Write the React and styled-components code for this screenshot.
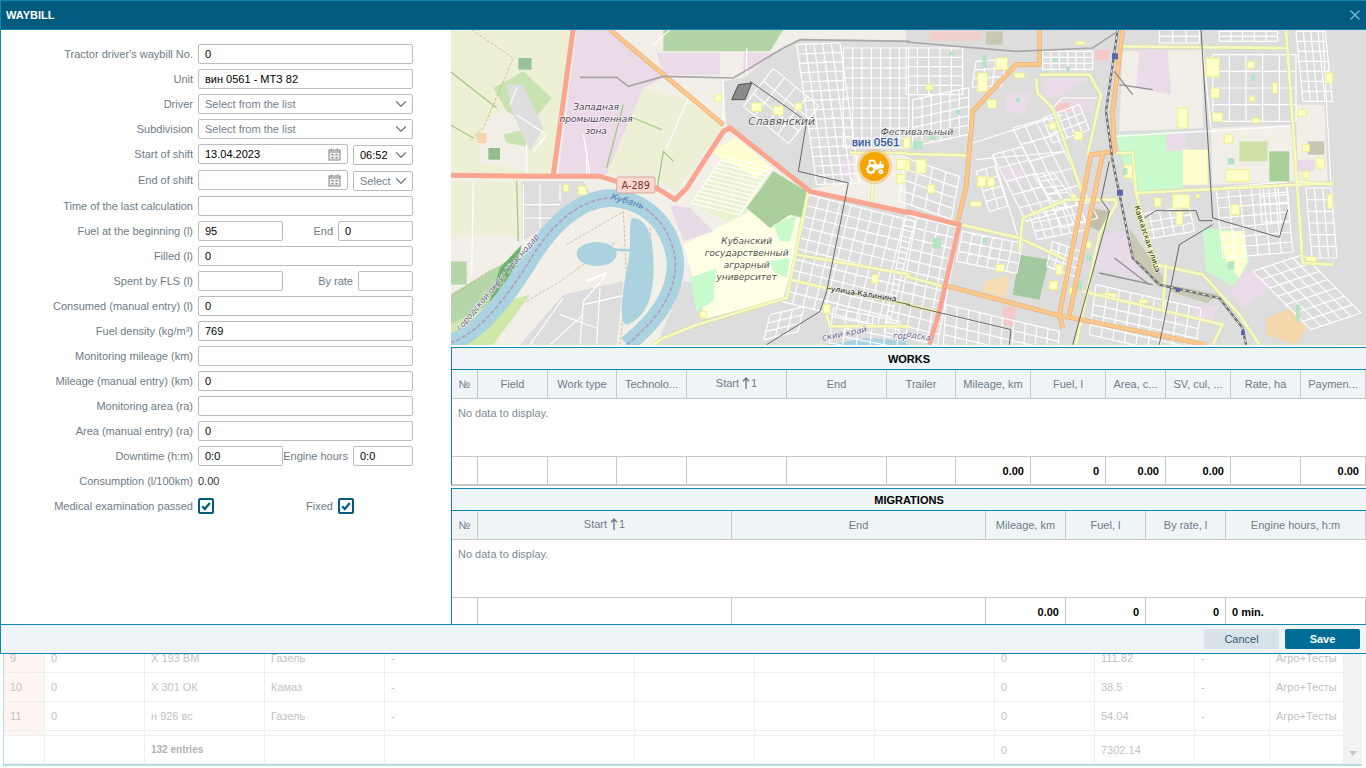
import React from 'react';
import styled, { createGlobalStyle } from 'styled-components';
import { ChevronDown, X } from 'lucide-react';
import { FaTractor } from 'react-icons/fa';

const Global = createGlobalStyle`
  html, body { margin: 0; padding: 0; background: #fff; overflow: hidden; }
  body { font-family: "Liberation Sans", Arial, sans-serif; font-size: 11px; }
  * { box-sizing: border-box; }
`;

/* ---------- page behind the modal ---------- */
const Page = styled.div`
  position: relative; width: 1366px; height: 768px; overflow: hidden; background: #fff;
  display: flex; flex-direction: column; justify-content: flex-end; padding: 0 4px 2px 3px;
`;
const BackTable = styled.div`
  display: flex; border-left: 1px solid #b8dce6; border-bottom: 2px solid #b8dce6; height: 124px;
`;
const BackRows = styled.div`width: 1340px; display: flex; flex-direction: column; justify-content: flex-end;`;
const BackRow = styled.div`
  display: grid; height: ${p => p.$h || 29}px; flex: none;
  grid-template-columns: 41px 100px 120px 120px 250px 120px 120px 120px 100px 100px 75px 74px;
  border-bottom: 1px solid #efefef;
`;
const BackCell = styled.div`
  padding: 0 6px; display: flex; align-items: center; color: ${p => p.$bold ? '#b2b2b2' : '#c2c2c2'};
  font-size: ${p => p.$bold ? 10 : 11}px; font-weight: ${p => p.$bold ? 700 : 400}; white-space: nowrap;
  border-right: 1px solid #efefef; background: ${p => p.$pink ? '#fff5f2' : '#fff'};
`;
const BackScroll = styled.div`
  width: 18px; background: #f3f3f3; display: flex; align-items: flex-end; justify-content: center; padding-bottom: 8px;
  &::after { content: ''; border: 4px solid transparent; border-top: 5px solid #c4c4c4; border-bottom: 0; }
`;

/* ---------- modal ---------- */
const Modal = styled.div`
  position: absolute; left: 0; top: 0; width: 1366px; height: 654px; display: flex; flex-direction: column;
  background: #fff; border-left: 1px solid #0d86b3; border-top: 1px solid #0d86b3;
`;
const Header = styled.div`
  height: 29px; flex: none; background: #005b7f; border-bottom: 1px solid #0d86b3; color: #fff;
  display: flex; align-items: center; justify-content: space-between; padding: 0 3px 0 5px;
  font-size: 11px; font-weight: 700;
`;
const Close = styled.span`color: #6fb3cc; display: flex;`;
const Main = styled.div`flex: 1; display: flex; min-height: 0;`;
const Form = styled.div`
  width: 450px; flex: none; padding-top: 14px; display: flex; flex-direction: column; gap: 5px;
`;
const Row = styled.div`display: flex; height: ${p => p.$h || 20}px; align-items: flex-start;`;
const Label = styled.div`
  width: ${p => p.$w || 197}px; flex: none; text-align: right; padding-right: 5px; color: #6e7b86; height: 20px; line-height: 20px;
  white-space: nowrap; font-size: 11px;
`;
const Field = styled.div`
  width: ${p => p.$w || 215}px; height: 20px; flex: none; border: 1px solid #bcbcbc; border-radius: 2px; background: #fff;
  display: flex; align-items: center; justify-content: space-between; padding: 0 6px; color: ${p => p.$ph ? '#75818c' : '#000'};
  font-size: 11px; white-space: nowrap; margin-top: ${p => p.$mt || 0}px; margin-left: ${p => p.$ml || 0}px;
`;
const Chevron = styled(ChevronDown)`color: #6e7b86; margin-right: -4px; flex: none;`;
const Plain = styled.div`color: #333; line-height: 20px; font-size: 11px;`;
const Check = styled.div`
  width: 16px; height: 16px; margin-top: 2px; border: 2px solid #005b7f; border-radius: 2px; display: flex; align-items: center; justify-content: center;
`;
const Right = styled.div`flex: 1; min-width: 0; display: flex; flex-direction: column;`;
const MapFrame = styled.div`position: relative; height: 315px; flex: none; background: #ddd; overflow: hidden; margin-bottom: 2px;`;
const MapSvg = styled.svg`display: block; width: 915px; height: 315px;`;
const MapLabel = styled.text`
  font-family: "DejaVu Sans", sans-serif; font-style: ${p => p.$upright ? 'normal' : 'italic'}; font-size: ${p => p.$size || 27}px;
  fill: ${p => p.$color || '#4f4056'}; stroke: ${p => p.$halo || 'rgba(255,255,255,.75)'}; stroke-width: 4px; paint-order: stroke;
  text-anchor: middle;
`;
const PinName = styled.div`
  position: absolute; left: 401px; top: 106px; color: #1c4f94; font-size: 11px; letter-spacing: .25px;
  -webkit-text-stroke: .25px #1c4f94; text-shadow: 0 0 2px #fff, 0 0 2px #fff; white-space: nowrap;
`;
const Pin = styled.div`
  position: absolute; left: 409px; top: 122px; width: 29px; height: 29px; border-radius: 50%; background: #f5a300;
  box-shadow: 0 0 0 3px rgba(240, 190, 110, .55); color: #fff; display: flex; align-items: center; justify-content: center;
`;

const Section = styled.div`
  border-left: 1px solid #0d86b3; border-top: 1px solid #0d86b3; margin-top: ${p => p.$mt || 0}px; flex: none;
  border-bottom: ${p => p.$last ? 0 : '2px solid #c8c8c8'};
`;
const Title = styled.div`
  height: 22px; background: #eff4f7; border-bottom: 1px solid #0d86b3; text-align: center; line-height: 22px; font-weight: 700; font-size: 11px; color: #000;
`;
const Cols = styled.div`display: grid; grid-template-columns: ${p => p.$cols}; height: ${p => p.$h}px;
  background: ${p => p.$head ? '#eff4f7' : '#fff'}; border-bottom: ${p => p.$nob ? 0 : '1px solid #c8c8c8'};`;
const HeadCell = styled.div`
  border-right: 1px solid #c8c8c8; color: #6e7b86; font-size: 11px; display: flex; align-items: center; justify-content: center;
  padding: 0 6px; overflow: hidden; white-space: nowrap;
`;
const Sort = styled.span`display: inline-flex; align-items: center; gap: 1px; margin-top: -2px; color: #6e7b86; `;
const SortWord = styled.span`margin-right: 2px;`;
const FootCell = styled.div`
  border-right: 1px solid #c8c8c8; color: #000; font-weight: 700; font-size: 11px; display: flex; align-items: center;
  justify-content: ${p => p.$left ? 'flex-start' : 'flex-end'}; padding: ${p => p.$low ? 2 : 0}px 6px 0; white-space: nowrap;
`;
const Empty = styled.div`height: 58px; padding: 8px 6px; color: #7d8a94; font-size: 11px; border-bottom: 1px solid #c8c8c8;`;
const Footer = styled.div`
  height: 30px; flex: none; background: #eff4f7; border-top: 1px solid #0d86b3; border-bottom: 1px solid #0d86b3;
  display: flex; justify-content: flex-end; align-items: flex-start; gap: 6px; padding: 4px 6px 0 0;
`;
const Btn = styled.div`
  width: 75px; height: 20px; border-radius: 2px; text-align: center; line-height: 20px; font-size: 11px;
  font-weight: ${p => p.$primary ? 700 : 400};
  background: ${p => p.$primary ? '#006d97' : '#d8e3e9'}; color: ${p => p.$primary ? '#fff' : '#33586c'};
`;

/* ---------- small icons ---------- */
const Calendar = () => (
  <svg width="13" height="13" viewBox="0 0 13 13" style={{ flex: 'none' }}>
    <rect x="1" y="2" width="11" height="10" fill="#f2f2f2" stroke="#7d868c" />
    <path d="M1 4h11" stroke="#7d868c" /><path d="M3.5 .5v2M9.5 .5v2" stroke="#7d868c" />
    <path d="M3.5 6h2v1.6h-2zM7.5 6h2v1.6h-2zM3.5 9h2v1.6h-2zM7.5 9h2v1.6h-2z" fill="#7d868c" />
  </svg>
);
const Tick = () => (
  <svg width="12" height="12" viewBox="0 0 12 12"><path d="M2.2 6.3 4.8 9 9.8 3" fill="none" stroke="#005b7f" strokeWidth="2.2" /></svg>
);
const ArrowUp = () => (
  <svg width="8" height="12" viewBox="0 0 8 12"><path d="M4 12V1M1 4.2 4 1l3 3.2" fill="none" stroke="#6e7b86" strokeWidth="1.4" /></svg>
);

/* ---------- map ---------- */
const pt = (a) => `${a[0].toFixed(1)} ${a[1].toFixed(1)}`;
function grid(o, u, nu, v, nv) {
  let d = '';
  for (let i = 0; i <= nu; i++) {
    const a = [o[0] + u[0] * i, o[1] + u[1] * i];
    d += `M${pt(a)}L${pt([a[0] + v[0] * nv, a[1] + v[1] * nv])}`;
  }
  for (let j = 0; j <= nv; j++) {
    const a = [o[0] + v[0] * j, o[1] + v[1] * j];
    d += `M${pt(a)}L${pt([a[0] + u[0] * nu, a[1] + u[1] * nu])}`;
  }
  return d;
}
const polys7 = [
  ['#eef0d5', '0,0 370,0 310,440 0,440'], ['#eef0d5', '0,460 215,460 215,620 0,620'],
  ['#ebdbe8', '380,5 480,5 640,150 580,180 470,440 325,440'], ['#b3d4a5', '640,5 1000,5 960,70 640,70'],
  ['#ebdbe8', '620,75 1000,75 880,140 640,140'], ['#f2efe9', '810,75 880,75 880,140 810,140'],
  ['#eef0d5', '580,180 710,215 815,295 680,490 600,440 470,440'], ['#dddddd', '215,460 400,460 430,510 300,590 215,640'],
  ['#f2efe9', '100,290 160,240 230,300 230,430 90,400'],
  ['#c8e3b0', '130,180 220,130 305,210 240,290 170,250'], ['#c8e3b0', '160,320 240,300 225,355 170,345'],
  ['#96bb8c', '115,360 150,360 150,395 115,395'], ['#9cc09c', '205,90 245,90 245,125 205,125'], ['#f4d5b0', '80,315 110,315 110,345 80,345'],
  ['#dedede', '170,170 220,170 280,300 240,370 190,260'],
  ['#b5d6a8', '0,700 50,700 50,770 0,770'], ['#b5d6a8', '0,800 170,700 120,830 0,890'], ['#6fb06e', '150,720 215,650 190,770 110,850'],
  ['#cfe8a8', '0,890 120,830 240,800 130,950 0,950'],
  ['#dddddd', '210,950 340,800 520,760 500,950'], ['#dddddd', '700,760 1000,800 950,950 620,950'],
  ['#eaf2cf', '820,385 965,420 860,600 720,520'], ['#ffffd0', '780,370 860,330 965,420 920,450'],
  ['#ffffe5', '880,560 1060,500 1010,810 960,830 770,880 700,650'], ['#aacf9a', '890,540 970,430 1070,490 1060,570 1020,560 960,600'],
  ['#c8facc', '720,750 800,720 790,820 740,850'], ['#c8facc', '960,700 1020,690 1010,750 970,730'], ['#c8facc', '970,590 1040,560 1020,640 990,640'],
  ['#e8dbe8', '660,530 720,540 790,610 700,640'],
  ['#dddddd', '880,150 1000,60 1050,35 1380,35 1380,380 1210,380 1200,460 1070,485 830,295 820,160'],
  ['#ebdbe8', '1165,395 1210,395 1210,450 1165,440'],
  ['#dddddd', '1075,490 1380,560 1380,950 950,950 1000,810 1060,600'],
  ['#dddddd', '740,880 1000,810 950,950 650,950'], ['#aad3df', '1130,950 1250,930 1380,940 1380,955 1130,955'],
];
const polys8 = [
  ['#dddddd', '0,0 1282,0 1282,950 0,950'],
  ['#f2efe9', '650,70 890,65 890,300 640,310'], ['#e9dbe8', '700,65 785,65 795,200 690,180'],
  ['#c8facc', '630,320 830,310 830,480 690,490 650,400'], ['#e9dbe8', '780,320 840,310 840,365 780,370'],
  ['#ffffd0', '830,365 905,365 905,470 830,470'],
  ['#f2efe9', '915,300 1155,290 1170,460 920,470'], ['#cfe3a8', '1000,340 1085,340 1085,400 1000,400'], ['#a8d098', '1090,370 1150,370 1150,460 1090,460'],
  ['#f2efe9', '1170,230 1255,230 1265,460 1175,460'], ['#c8c8b0', '1205,340 1255,340 1255,380 1205,380'], ['#e9dbe8', '1175,395 1225,395 1225,430 1175,430'],
  ['#c8facc', '890,600 1010,610 1030,700 990,780 900,730'], ['#ffffd0', '940,610 1010,610 1025,700 1000,750 960,700'],
  ['#e9dbe8', '1020,720 970,790 1020,840 1100,770'], ['#f3d8ad', '1080,870 1160,840 1200,900 1170,950 1080,920'],
  ['#e8dbe8', '580,620 670,610 720,770 650,740 560,720'], ['#c8c8b4', '670,600 780,760 750,770 680,680'], ['#c8c8b4', '790,770 940,800 900,825 790,790'],
  ['#a4c8a0', '340,680 430,695 400,815 320,800'], ['#f6ddb4', '240,760 310,740 300,810 230,790'], ['#f5c8c8', '290,835 330,835 325,895 290,890'],
  ['#c0c0a8', '550,540 610,550 580,610 540,590'], ['#efd0cc', '70,10 230,10 220,40 70,40'], ['#c8c8b4', '240,10 290,10 290,50 240,50'],
  ['#e9dbe8', '300,200 370,195 360,260 300,250'], ['#e9dbe8', '410,150 550,150 470,200 420,210'], ['#e9dbe8', '450,220 570,210 560,255 450,250'],
  ['#e9dbe8', '290,420 350,420 350,465 300,460'], ['#e9dbe8', '860,830 930,835 920,880 860,870'],
  ['#dff0d8', '910,90 940,90 940,150 910,150'], ['#f5c8c8', '570,65 610,65 605,95 565,95'], ['#f5c8c8', '450,225 490,225 490,250 450,250'],
];
const b8 = [[270,90,35,35],[215,135,30,55],[60,170,20,15],[245,215,25,25],[325,135,30,15],[510,40,25,10],[430,285,20,20],[505,310,25,25],[30,395,30,40],[65,470,20,25],[215,445,25,30],[245,450,20,25],[195,520,30,15],[495,500,15,15],[745,510,20,25],[800,500,50,40],[975,530,25,30],[815,240,30,60],[1025,100,20,20],[1100,165,15,30],[1030,205,15,15],[1260,135,20,30],[1175,245,25,20],[955,320,25,25],[960,425,70,35],[1190,350,20,20],[1230,390,25,30],[1190,430,20,20],[1200,685,30,15],[900,90,40,55],[915,180,25,30],[920,255,30,25],[1040,270,20,15],[450,710,20,30],[590,795,40,15],[700,815,25,10],[870,500,10,10],[430,760,25,25],[490,780,20,20],[540,640,15,20],[0,400,10,30],[655,410,25,40],[270,710,25,20],[810,550,20,40],[1265,500,15,40]];
const b7 = [[1340,395,40,30],[1340,440,25,25],[795,200,20,20],[905,225,30,25],[970,235,30,25],[1035,225,20,20],[340,470,15,20],[385,475,25,25],[1265,740,20,25],[1360,330,20,30],[750,850,20,20],[1120,830,20,25]];
const pale8 = [[70,320,20,15],[150,245,12,15],[20,340,30,25],[330,210,12,12],[440,90,15,12],[480,115,12,15],[80,630,25,30],[230,630,12,15],[510,760,18,25],[540,680,18,18],[650,420,14,20],[965,390,20,20],[965,700,20,25],[1035,140,12,18],[1170,830,12,50],[230,80,12,40],[130,70,15,12]];
const white7 = [
  grid([1040,50],[26,-1],5,[4,28],15), grid([880,235],[34,28],4,[30,-38],3), grid([1180,60],[28,0],7,[0,30],10),
  grid([1075,500],[32,8],10,[-8,32],10), grid([960,860],[34,-8],3,[-6,25],3), grid([1150,840],[40,8],5,[-3,26],4),
  'M390 950L400 820L470 740M240 950L340 810M300 950L400 860M400 830L530 800M330 860L440 900M450 780L440 950',
  'M220 470V640M270 470V600M220 530H330M220 570H330M330 470V520',
  'M70 460L65 740M180 230L200 180M200 260L290 320L250 370M230 350V440M400 320L420 440M650 360L715 210M610 50L660 5M820 150V290M890 60V140M410 370V440',
];
const white8 = [
  grid([0,560],[32,8],5,[-6,32],11), grid([170,610],[30,6],6,[-6,30],3), grid([120,830],[34,8],10,[-2,30],4),
  grid([0,60],[34,0],5,[0,28],5), grid([410,70],[25,0],6,[0,18],3),
  grid([320,300],[35,-10],3,[25,50],6), grid([260,380],[30,-8],3,[20,40],5), grid([760,5],[40,0],3,[0,20],2),
  grid([1170,10],[22,0],4,[3,30],7), grid([920,80],[50,0],5,[0,50],4), grid([930,480],[35,-3],6,[3,30],7),
  grid([1040,730],[30,-10],5,[25,25],7), grid([1200,480],[25,0],3,[3,35],6), grid([570,770],[35,8],9,[-4,30],5),
  grid([700,560],[30,-5],5,[5,25],3), grid([380,440],[30,-4],2,[15,20],5), grid([0,390],[40,14],4,[-6,32],4),
  grid([20,215],[28,-6],6,[0,28],5), grid([210,430],[28,-8],2,[10,30],4), grid([370,560],[25,-5],6,[8,25],3),
  grid([940,10],[35,0],5,[0,15],2), grid([410,270],[22,-8],5,[10,25],3), grid([440,640],[22,8],4,[-6,25],3),
  grid([210,100],[30,-2],3,[-4,26],3), grid([1060,480],[28,-2],3,[2,26],4),
  'M200 345L470 260M210 395L480 370M630 325L1150 295M915 300L890 65M1250 5L1275 470M260 380L340 640M440 240L470 210H575',
];
const Road = ({ d, fill, casing, w }) => (
  <>
    <path d={d} fill="none" stroke={casing} strokeWidth={w + 3} strokeLinejoin="round" />
    <path d={d} fill="none" stroke={fill} strokeWidth={w} strokeLinejoin="round" />
  </>
);
const Trunk = '#f9a58f', Pri = '#fbc78d', PriC = '#e8a865', Sec = '#f7fabf', SecC = '#d9dc9a';
const river = 'M0 945C90 915 170 810 250 680C300 600 380 515 480 510C590 515 660 590 675 690C685 780 630 870 530 950';

const MapView = () => (
  <MapSvg viewBox="3 6 2745 945" preserveAspectRatio="none">
    <rect x="0" y="0" width="2750" height="960" fill="#f2efe9" />
    {polys7.map(([c, p], i) => <polygon key={i} points={p} fill={c} />)}
    <g transform="translate(1368 0)">{polys8.map(([c, p], i) => <polygon key={i} points={p} fill={c} />)}</g>
    <rect x="2650" y="0" width="100" height="960" fill="#dddddd" />
    <path d={grid([820,385],[145,35],1,[-8,11.7],12)} fill="none" stroke="#fff" strokeWidth="4" />
    <path d="M0 130L140 240M0 290L70 330M550 270L635 305M520 230L470 420M620 490L640 370L670 400M200 460L205 640" fill="none" stroke="#a3c98a" strokeWidth="4" />
    <g fill="none" stroke="#fff" strokeWidth="3.5">
      {white7.map((d, i) => <path key={i} d={d} />)}
      <g transform="translate(1368 0)">{white8.map((d, i) => <path key={i} d={d} />)}</g>
    </g>
    <path d="M65 5L190 90L100 300L60 340M350 650L520 550L530 760M230 820L330 760L500 640M510 950L530 760M0 810L130 720M600 600L610 740" fill="none" stroke="#c9a56a" strokeWidth="2" strokeDasharray="9 5" />
    <path d={river} fill="none" stroke="#aad3df" strokeWidth="52" />
    <path d={river} fill="none" stroke="#ae9fc0" strokeWidth="5" strokeDasharray="14 5" />
    <ellipse cx="440" cy="678" rx="60" ry="36" fill="#aad3df" />
    <path d="M490 665L560 668" stroke="#aad3df" strokeWidth="8" />
    <path d="M545 570C590 570 612 620 610 720C612 800 590 870 530 890C505 885 515 800 535 700C545 640 535 600 545 570Z" fill="#aad3df" />
    <path d="M410 760L470 735" stroke="#fff" strokeWidth="8" />
    <g stroke="#eef08a" strokeWidth="3" fill="#ffffc8">
      {b7.map(([x, y, w, h], i) => <rect key={i} x={x} y={y} width={w} height={h} />)}
      <g transform="translate(1368 0)">{b8.map(([x, y, w, h], i) => <rect key={i} x={x} y={y} width={w} height={h} />)}</g>
    </g>
    <g transform="translate(1368 0)" fill="#b5e3c5">
      {pale8.map(([x, y, w, h], i) => <rect key={i} x={x} y={y} width={w} height={h} />)}
    </g>
    <g>
      <Road d="M1075 490L1010 810L740 890L640 930L610 950" fill={Sec} casing={SecC} w={8} />
      <Road d="M1040 680L1380 740M1020 755L1130 780L1380 830M1130 860L1140 895H1380M1270 460L1265 520M1200 375H1380" fill={Sec} casing={SecC} w={8} />
      <g transform="translate(1368 0)">
        <Road d="M0 378L190 382M400 140H550L585 200L545 380M390 150L395 195L440 240L530 500M650 55L1140 60M1140 5L1190 705L1282 710M690 495L1282 465M620 375H680L690 495L750 710L890 740L1000 860L1060 950M350 570L480 515H630V530L580 620L510 950M165 590L340 630L480 695M350 570L340 670M530 790L950 890L920 950M780 710L770 850M0 745L110 775M0 830L90 850M1170 460L1282 470" fill={Sec} casing={SecC} w={8} />
        <Road d="M400 5V110H330L200 250L180 480L155 580M650 5L620 250L625 370L555 380L460 860L470 900M590 380L490 860M110 770L450 860L900 950" fill={Pri} casing={PriC} w={11} />
        <path d="M0 550L160 590L100 850L70 950" fill="none" stroke={Trunk} strokeWidth="14" />
      </g>
      <Road d="M480 5L820 290" fill={Pri} casing={PriC} w={11} />
      <path d="M370 0L310 440M0 442L300 445L450 445L500 460L620 480L675 515L710 480L820 310L840 300L1080 490L1380 555" fill="none" stroke={Trunk} strokeWidth="15" strokeLinejoin="round" />
    </g>
    <g transform="translate(1368 0)" fill="none">
      <path d="M635 5L600 250L620 400L680 690L760 770L940 810L1010 900L1020 950" stroke="#707070" strokeWidth="7" />
      <path d="M635 5L600 250L620 400L680 690L760 770L940 810L1010 900L1020 950" stroke="#fff" strokeWidth="3" strokeDasharray="10 10" />
      <path d="M625 130L680 200M640 170L740 185M625 690L730 770M580 735L740 770" stroke="#909090" strokeWidth="4" />
      <path d="M885 5L920 570L1120 628L1145 545M920 590L820 650L760 950M715 570L750 548H870L880 578H920M610 400L585 515L610 550L500 950M0 830L315 905L310 950" stroke="#666" strokeWidth="3" />
      <path d="M0 42L330 70L560 60L635 10" stroke="#a8a8a8" strokeWidth="5" />
      <g fill="#5a68a8" stroke="none">
        <rect x="618" y="76" width="18" height="18" /><rect x="633" y="485" width="18" height="18" /><rect x="809" y="780" width="13" height="12" /><rect x="1005" y="908" width="12" height="13" />
      </g>
    </g>
    <path d="M390 148H500L535 175L640 145L850 150L1000 60L1050 35L1380 40" fill="none" stroke="#a8a8a8" strokeWidth="5" />
    <path d="M900 160L1070 280L1045 430L1195 465L1130 790L1110 850L950 950M1130 780L1380 830" fill="none" stroke="#666" strokeWidth="3" />
    <path d="M845 215L865 170L905 165L885 215Z" fill="#8a8a8a" stroke="#555" strokeWidth="3" />
    <MapLabel x="438" y="245">Западная</MapLabel>
    <MapLabel x="438" y="282">промышленная</MapLabel>
    <MapLabel x="438" y="318">зона</MapLabel>
    <MapLabel x="995" y="290" $size={32} $color="#555">Славянский</MapLabel>
    <MapLabel x="1401" y="322" $size={28} $color="#555">Фестивальный</MapLabel>
    <MapLabel x="890" y="648" $color="#55553a">Кубанский</MapLabel>
    <MapLabel x="890" y="685" $color="#55553a">государственный</MapLabel>
    <MapLabel x="890" y="720" $color="#55553a">аграрный</MapLabel>
    <MapLabel x="890" y="756" $color="#55553a">университет</MapLabel>
    <MapLabel transform="translate(530 528) rotate(17)" $size={27} $color="#4f7fc0" $halo="rgba(170,211,223,.6)">Кубань</MapLabel>
    <MapLabel transform="translate(150 768) rotate(-50)" $size={25} $color="#6e5f88">городской округ Краснодар</MapLabel>
    <MapLabel transform="translate(1240 805) rotate(9)" $size={23} $upright $color="#222">улица Калинина</MapLabel>
    <MapLabel transform="translate(2085 635) rotate(72)" $size={22} $upright $color="#222" $halo={Sec}>Кавказская улица</MapLabel>
    <MapLabel transform="translate(1185 925) rotate(-11)" $size={26} $color="#6e5f88">ский край</MapLabel>
    <MapLabel x="1352" y="932" $size={26} $color="#6e5f88">гор</MapLabel>
    <MapLabel transform="translate(1405 932) rotate(10)" $size={24} $color="#6e5f88">одска</MapLabel>
    <g>
      <rect x="500" y="447" width="115" height="48" rx="6" fill="#f8d8cf" stroke="#d9a898" strokeWidth="3" />
      <MapLabel x="557" y="482" $size={29} $upright $color="#7a3526" $halo="transparent">A-289</MapLabel>
    </g>
  </MapSvg>
);

/* ---------- data ---------- */
const wCols = '26px 70px 69px 70px 100px 100px 69px 75px 75px 60px 65px 70px 65px';
const mCols = '26px 254px 254px 80px 80px 80px 140px';
const wHead = ['№', 'Field', 'Work type', 'Technolo...', 'S', 'End', 'Trailer', 'Mileage, km', 'Fuel, l', 'Area, c...', 'SV, cul, ...', 'Rate, ha', 'Paymen...'];
const wFoot = ['', '', '', '', '', '', '', '0.00', '0', '0.00', '0.00', '', '0.00'];
const mHead = ['№', 'S', 'End', 'Mileage, km', 'Fuel, l', 'By rate, l', 'Engine hours, h:m'];
const back = [
  ['9', '0', 'Х 193 ВМ', 'Газель', '111.82'], ['10', '0', 'Х 301 ОК', 'Камаз', '38.5'], ['11', '0', 'н 926 вс', 'Газель', '54.04'],
];

const renderHead = (h, i) => (
  <HeadCell key={i}>
    {h === 'S' ? <Sort><SortWord>Start</SortWord><ArrowUp />1</Sort> : h}
  </HeadCell>
);

export default function App() {
  return (
    <Page>
      <Global />
      <BackTable>
        <BackRows>
          {back.map((r) => (
            <BackRow key={r[0]}>
              <BackCell $pink>{r[0]}</BackCell><BackCell>{r[1]}</BackCell><BackCell>{r[2]}</BackCell><BackCell>{r[3]}</BackCell><BackCell>-</BackCell>
              <BackCell /><BackCell /><BackCell /><BackCell>0</BackCell><BackCell>{r[4]}</BackCell><BackCell>-</BackCell><BackCell>Агро+Тесты</BackCell>
            </BackRow>
          ))}
          <BackRow $h={5}><BackCell $pink /><BackCell /><BackCell /><BackCell /><BackCell /><BackCell /><BackCell /><BackCell /><BackCell /><BackCell /><BackCell /><BackCell /></BackRow>
          <BackRow $h={28}>
            <BackCell /><BackCell /><BackCell $bold>132 entries</BackCell><BackCell /><BackCell /><BackCell /><BackCell /><BackCell />
            <BackCell>0</BackCell><BackCell>7302.14</BackCell><BackCell /><BackCell />
          </BackRow>
        </BackRows>
        <BackScroll />
      </BackTable>

      <Modal>
        <Header>WAYBILL<Close><X size={16} strokeWidth={2.4} /></Close></Header>
        <Main>
          <Form>
            <Row><Label>Tractor driver's waybill No.</Label><Field>0</Field></Row>
            <Row><Label>Unit</Label><Field>вин 0561 - МТЗ 82</Field></Row>
            <Row><Label>Driver</Label><Field $ph>Select from the list<Chevron size={18} strokeWidth={1.6} /></Field></Row>
            <Row><Label>Subdivision</Label><Field $ph>Select from the list<Chevron size={18} strokeWidth={1.6} /></Field></Row>
            <Row $h={21}><Label>Start of shift</Label><Field $w={150}>13.04.2023<Calendar /></Field><Field $w={60} $ml={5} $mt={1}>06:52<Chevron size={18} strokeWidth={1.6} /></Field></Row>
            <Row $h={21}><Label>End of shift</Label><Field $w={150}><span /><Calendar /></Field><Field $w={60} $ml={5} $mt={1} $ph>Select<Chevron size={18} strokeWidth={1.6} /></Field></Row>
            <Row><Label>Time of the last calculation</Label><Field /></Row>
            <Row><Label>Fuel at the beginning (l)</Label><Field $w={85}>95</Field><Label $w={55}>End</Label><Field $w={75}>0</Field></Row>
            <Row><Label>Filled (l)</Label><Field>0</Field></Row>
            <Row><Label>Spent by FLS (l)</Label><Field $w={85} /><Label $w={75}>By rate</Label><Field $w={55} /></Row>
            <Row><Label>Consumed (manual entry) (l)</Label><Field>0</Field></Row>
            <Row><Label>Fuel density (kg/m³)</Label><Field>769</Field></Row>
            <Row><Label>Monitoring mileage (km)</Label><Field /></Row>
            <Row><Label>Mileage (manual entry) (km)</Label><Field>0</Field></Row>
            <Row><Label>Monitoring area (ra)</Label><Field /></Row>
            <Row><Label>Area (manual entry) (ra)</Label><Field>0</Field></Row>
            <Row><Label>Downtime (h:m)</Label><Field $w={85}>0:0</Field><Label $w={70}>Engine hours</Label><Field $w={60}>0:0</Field></Row>
            <Row><Label>Consumption (l/100km)</Label><Plain>0.00</Plain></Row>
            <Row><Label>Medical examination passed</Label><Check><Tick /></Check><Label $w={124}>Fixed</Label><Check><Tick /></Check></Row>
          </Form>
          <Right>
            <MapFrame>
              <MapView />
              <PinName>вин 0561</PinName>
              <Pin><FaTractor size={18} /></Pin>
            </MapFrame>
            <Section>
              <Title>WORKS</Title>
              <Cols $cols={wCols} $h={29} $head>{wHead.map(renderHead)}</Cols>
              <Empty>No data to display.</Empty>
              <Cols $cols={wCols} $h={27} $nob>{wFoot.map((f, i) => <FootCell key={i}>{f}</FootCell>)}</Cols>
            </Section>
            <Section $mt={2} $last>
              <Title>MIGRATIONS</Title>
              <Cols $cols={mCols} $h={29} $head>{mHead.map(renderHead)}</Cols>
              <Empty>No data to display.</Empty>
              <Cols $cols={mCols} $h={26} $nob>
                <FootCell /><FootCell /><FootCell /><FootCell $low>0.00</FootCell><FootCell $low>0</FootCell><FootCell $low>0</FootCell><FootCell $left $low>0 min.</FootCell>
              </Cols>
            </Section>
          </Right>
        </Main>
        <Footer><Btn>Cancel</Btn><Btn $primary>Save</Btn></Footer>
      </Modal>
    </Page>
  );
}
